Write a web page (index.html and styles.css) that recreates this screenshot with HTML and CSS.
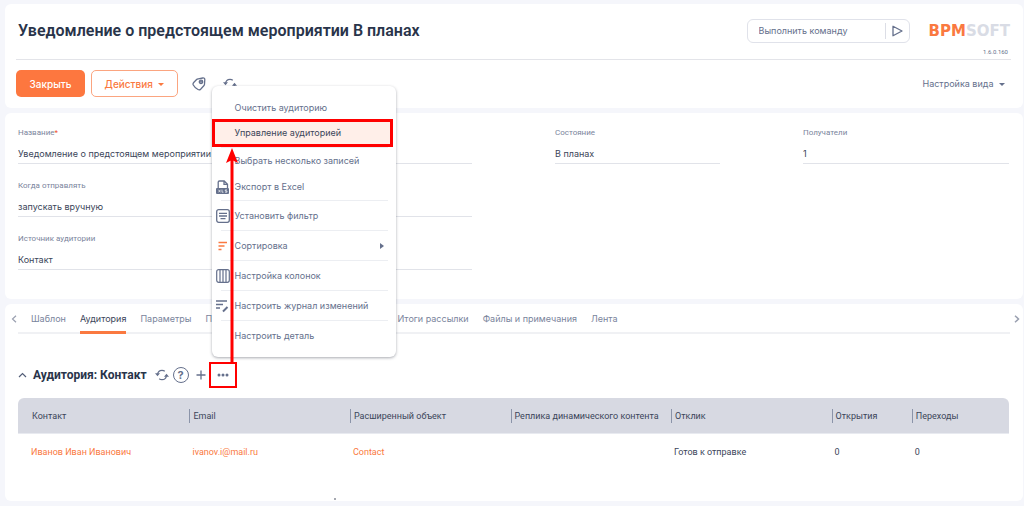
FILE: index.html
```html
<!DOCTYPE html>
<html lang="ru">
<head>
<meta charset="utf-8">
<meta name="viewport" content="width=device-width, initial-scale=1">
<title>Уведомление о предстоящем мероприятии</title>
<link rel="stylesheet" href="styles.css">
</head>
<body>
<header class="card header">
  <div class="header-top">
    <h1 class="title">Уведомление о предстоящем мероприятии В планах</h1>
    <form class="command">
      <input class="command-input" type="text" placeholder="Выполнить команду" aria-label="Выполнить команду">
      <button class="command-run" type="button" aria-label="Выполнить"><svg width="11" height="12" viewBox="0 0 11 12"><path d="M1 1.2v9.6L10 6z" fill="none" stroke="#65708c" stroke-width="1.3" stroke-linejoin="round"/></svg></button>
    </form>
    <div class="brand">
      <div class="logo"><span class="logo-main">BPM</span><span class="logo-rest">SOFT</span></div>
      <div class="version">1.6.0.160</div>
    </div>
  </div>
  <div class="toolbar">
    <button class="btn btn-primary" type="button">Закрыть</button>
    <button class="btn btn-outline" type="button">Действия <span class="caret"></span></button>
    <button class="icon-btn tag" type="button" aria-label="Теги"><svg width="14" height="14" viewBox="0 0 14 14" fill="none" stroke="#65708c" stroke-width="1.3"><path d="M6.2 1.8 10.8 1c1.2-.2 2 .5 2 1.600L12.500 7.200c0 .6-.3 1.200-.7 1.600L8.600 12.200c-.7.7-1.700.8-2.600.3C4 11.600 2.400 10 1.300 8c-.4-.8-.3-1.800.4-2.500L4.600 2.500c.4-.4 1-.6 1.600-.7z"/><circle cx="9" cy="4.800" r="1.700"/><circle cx="9" cy="4.800" r=".4"/></svg></button>
    <button class="icon-btn" type="button" aria-label="Обновить"><svg width="14" height="12" viewBox="0 0 14 12"><g fill="none" stroke="#65708c" stroke-width="1.200"><path d="M2.500 5.500C2.800 3 4.800 1.300 7 1.300c1.100 0 2 .3 2.800 1M11.500 6.500c-.3 2.500-2.300 4.200-4.500 4.200-1.100 0-2-.3-2.800-1"/></g><path d="M0 4.300h5L2.500 7.300zM14 7.700H9l2.500-3z" fill="#65708c"/></svg></button>
    <button class="view-btn" type="button">Настройка вида <span class="caret"></span></button>
  </div>
</header>

<main class="main">
  <section class="card form">
    <div class="form-col">
      <label class="field"><span class="label">Название<span class="required">*</span></span><input class="value" value="Уведомление о предстоящем мероприятии"></label>
      <label class="field"><span class="label">Когда отправлять</span><input class="value" value="запускать вручную"></label>
      <label class="field"><span class="label">Источник аудитории</span><input class="value" value="Контакт"></label>
    </div>
    <div class="form-col">
      <label class="field"><span class="label">Состояние</span><input class="value" value="В планах"></label>
    </div>
    <div class="form-col">
      <label class="field"><span class="label">Получатели</span><input class="value" value="1"></label>
    </div>
  </section>

  <section class="card details">
    <div class="tabs">
      <button class="tab-scroll" type="button" aria-label="Назад"><svg width="6" height="8" viewBox="0 0 6 8"><path d="M5 .7 1.500 4 5 7.300" fill="none" stroke="#9aa0b0" stroke-width="1.200"/></svg></button>
      <div class="tab-list" role="tablist">
        <button class="tab" role="tab" type="button">Шаблон</button>
        <button class="tab tab-active" role="tab" type="button" aria-selected="true">Аудитория</button>
        <button class="tab" role="tab" type="button">Параметры</button>
        <button class="tab tab-wide" role="tab" type="button">Пр</button>
        <button class="tab" role="tab" type="button">Итоги рассылки</button>
        <button class="tab" role="tab" type="button">Файлы и примечания</button>
        <button class="tab" role="tab" type="button">Лента</button>
      </div>
      <button class="tab-scroll" type="button" aria-label="Вперёд"><svg width="6" height="8" viewBox="0 0 6 8"><path d="M1 .7 4.500 4 1 7.300" fill="none" stroke="#9aa0b0" stroke-width="1.500"/></svg></button>
    </div>

    <div class="detail-head">
      <button class="icon-btn" type="button" aria-label="Свернуть"><svg width="9" height="6" viewBox="0 0 9 6"><path d="M1 5l3.500-3.500L8 5" fill="none" stroke="#535e78" stroke-width="1.200"/></svg></button>
      <h2 class="detail-title">Аудитория: Контакт</h2>
      <button class="icon-btn" type="button" aria-label="Обновить список"><svg width="14" height="12" viewBox="0 0 14 12"><g fill="none" stroke="#65708c" stroke-width="1.200"><path d="M2.500 5.500C2.800 3 4.800 1.300 7 1.300c1.100 0 2 .3 2.800 1M11.500 6.500c-.3 2.500-2.300 4.200-4.500 4.200-1.100 0-2-.3-2.800-1"/></g><path d="M0 4.300h5L2.500 7.300zM14 7.700H9l2.500-3z" fill="#65708c"/></svg></button>
      <button class="help" type="button" aria-label="Справка">?</button>
      <button class="icon-btn plus" type="button" aria-label="Добавить"><svg width="10" height="10" viewBox="0 0 10 10"><path d="M5 .5v9M.5 5h9" stroke="#65708c" stroke-width="1.300"/></svg></button>
      <div class="more-wrap">
        <button class="more" type="button" aria-label="Меню"><svg width="12" height="4" viewBox="0 0 12 4" fill="#65708c"><circle cx="2" cy="2" r="1.500"/><circle cx="6" cy="2" r="1.500"/><circle cx="10" cy="2" r="1.500"/></svg></button>
        <div class="menu" role="menu">
          <button class="item item-short" role="menuitem" type="button"><span>Очистить аудиторию</span></button>
          <button class="item item-marked" role="menuitem" type="button"><span>Управление аудиторией</span></button>
          <div class="sep"></div>
          <button class="item item-close" role="menuitem" type="button"><span>Выбрать несколько записей</span></button>
          <button class="item item-close" role="menuitem" type="button"><svg width="14" height="14" viewBox="0 0 14 14"><path d="M2.200 8V2.200C2.200 1.400 2.700 1 3.400 1h4.800L11.500 4.200V8M8 1.200v3.200h3.300" fill="none" stroke="#65708c" stroke-width="1.300"/><rect y="8" width="13" height="6" rx="1" fill="#65708c"/><path d="M2.500 9.800l2 2.500M4.500 9.800l-2 2.500M6 9.600v2.600h1.500M11 9.900H9.300V11H11v1.200H9" fill="none" stroke="#fff" stroke-width=".7"/></svg><span>Экспорт в Excel</span></button>
          <div class="sep"></div>
          <button class="item" role="menuitem" type="button"><svg width="14" height="14" viewBox="0 0 14 14" fill="none" stroke="#65708c" stroke-width="1.300"><rect x=".7" y=".7" width="12.600" height="12.600" rx="2"/><path d="M3 4.300h8M3 7h8M4.500 9.700h5"/></svg><span>Установить фильтр</span></button>
          <div class="sep"></div>
          <button class="item" role="menuitem" type="button"><svg width="14" height="14" viewBox="0 0 14 14" stroke="#fa7940" stroke-width="1.400"><path d="M2.500 3.500h8.500M2.500 7h6M2.500 10.500h3"/></svg><span>Сортировка</span><i class="submenu"></i></button>
          <div class="sep"></div>
          <button class="item" role="menuitem" type="button"><svg width="14" height="14" viewBox="0 0 14 14" fill="none" stroke="#65708c" stroke-width="1.200"><rect x=".7" y=".7" width="12.600" height="12.600" rx="2"/><path d="M4 1v12M7 1v12M10 1v12"/></svg><span>Настройка колонок</span></button>
          <div class="sep"></div>
          <button class="item" role="menuitem" type="button"><svg width="14" height="14" viewBox="0 0 14 14" stroke="#65708c" stroke-width="1.300"><path d="M0 2h11M0 5.500h7M0 9h4"/><path d="M7 12.500 11.500 8" stroke-width="2"/></svg><span>Настроить журнал изменений</span></button>
          <div class="sep"></div>
          <button class="item" role="menuitem" type="button"><span>Настроить деталь</span></button>
        </div>
        <svg class="arrow" width="12" height="214" viewBox="0 0 12 214"><path d="M6 0 12 15 6 12 0 15z" fill="#f00"/><path d="M6 11v203" stroke="#f00" stroke-width="3"/></svg>
      </div>
    </div>

    <table class="grid">
      <colgroup><col class="c-first"><col class="c-wide"><col class="c-wide"><col class="c-wide"><col class="c-wide"><col class="c-narrow"><col></colgroup>
      <thead><tr><th><span>Контакт</span></th><th><span>Email</span></th><th><span>Расширенный объект</span></th><th><span>Реплика динамического контента</span></th><th><span>Отклик</span></th><th><span>Открытия</span></th><th><span>Переходы</span></th></tr></thead>
      <tbody><tr><td><a href="#">Иванов Иван Иванович</a></td><td><a href="#">ivanov.i@mail.ru</a></td><td><a href="#">Contact</a></td><td></td><td>Готов к отправке</td><td>0</td><td>0</td></tr></tbody>
    </table>
  </section>
</main>
</body>
</html>
```
FILE: styles.css
```css
* { box-sizing: border-box; }
body {
  margin: 0;
  padding: 4px 1px 5px 5px;
  background: #f5f6fb;
  font: 9px/14px Inter, Roboto, "Liberation Sans", sans-serif;
  color: #3b4559;
}
button, input { font: inherit; color: inherit; }
button { padding: 0; border: 0; background: none; }
svg { display: block; }
h1, h2 { margin: 0; }
a { color: #fa7940; text-decoration: none; }
.card { background: #fff; border-radius: 6px; }

.header { padding: 0 12px 11px 11px; }
.header-top {
  display: flex;
  align-items: flex-start;
  height: 56px;
  border-bottom: 1px solid #e3e4e9;
}
.title {
  flex: 1;
  margin: 15px 0 0 2px;
  font-family: Roboto, sans-serif;
  font-size: 16px;
  line-height: 24px;
  font-weight: 600;
  color: #29344a;
}
.command {
  display: flex;
  align-items: center;
  width: 163px;
  height: 24px;
  margin-top: 15px;
  border: 1px solid #e0e2ea;
  border-radius: 6px;
}
.command-input {
  flex: 1;
  min-width: 0;
  padding: 0 0 0 11px;
  border: 0;
  outline: 0;
  background: none;
}
.command-input::placeholder { color: #65708c; opacity: 1; }
.command-run {
  display: grid;
  place-items: center;
  width: 24px;
  height: 16px;
  border-left: 1px solid #dcdee6;
}
.brand { margin: 21px 1px 0 19px; }
.logo {
  font: 15px/12px "DejaVu Sans", sans-serif;
  white-space: nowrap;
}
.logo-main { font-weight: 700; color: #fa7940; }
.logo-rest { font-weight: 700; color: #d9dce5; }
.version {
  margin: 11px 2px 0 0;
  font-family: Roboto, sans-serif;
  font-size: 6px;
  line-height: 8px;
  text-align: right;
  color: #65708c;
}

.toolbar { display: flex; align-items: center; padding-top: 10px; }
.btn { height: 27px; border-radius: 5px; font-size: 10px; font-weight: 500; }
.btn-primary { width: 69px; background: #fd773f; color: #fff; }
.btn-outline {
  width: 87px;
  margin-left: 6px;
  border: 1px solid #fba580;
  color: #fa7940;
}
.caret {
  display: inline-block;
  margin-left: 3px;
  border: 3px solid transparent;
  border-top-color: currentColor;
  border-bottom: 0;
  vertical-align: middle;
}
.tag { margin: 0 17px 0 14px; }
.view-btn { margin: 0 6px 0 auto; color: #65708c; }

.main { display: grid; gap: 5px; margin-top: 5px; }
.form {
  display: grid;
  grid-template-columns: 454fr 165fr 206fr;
  column-gap: 83px;
  padding: 13px 14px 29px 13px;
}
.form-col { display: grid; gap: 15px; align-content: start; }
.field { display: grid; gap: 3px; }
.label { font-family: Roboto, sans-serif; font-size: 8px; color: #7a849c; }
.required { color: #f04a2a; }
.value {
  width: 100%;
  height: 21px;
  padding: 0;
  border: 0;
  border-bottom: 1px solid #e1e3e9;
  background: none;
  outline: 0;
}

.details { padding-bottom: 29px; }
.details::after {
  content: "";
  display: block;
  width: 2px;
  height: 2px;
  margin: 28px 0 -28px 329px;
  background: #a5a8b0;
}
.tabs { display: flex; }
.tab-scroll { display: grid; place-items: center; width: 13px; }
.tab-scroll:first-child { padding-left: 4px; }
.tab-list {
  display: flex;
  flex: 1;
  gap: 14px;
  height: 30px;
  padding-left: 13px;
  border-bottom: 2px solid #f0f1f4;
}
.tab {
  height: 30px;
  padding-top: 2px;
  border-bottom: 3px solid transparent;
  color: #7a849c;
  white-space: nowrap;
}
.tab-active { border-color: #fa7940; color: #3b4559; }
.tab-wide { width: 178px; text-align: left; }

.detail-head {
  display: flex;
  align-items: center;
  padding: 28px 0 10px 13px;
}
.detail-title {
  margin: 0 8px 0 6px;
  font-family: Roboto, sans-serif;
  font-size: 12px;
  line-height: 16px;
  font-weight: 700;
  color: #29344a;
}
.help {
  width: 16px;
  height: 16px;
  margin-left: 4px;
  border: 1px solid #65708c;
  border-radius: 50%;
  font-size: 11px;
  line-height: 14px;
  font-weight: 700;
  color: #65708c;
}
.plus { margin: 0 3px 0 7px; }
.more-wrap { position: relative; }
.more {
  display: grid;
  place-items: center;
  width: 28px;
  height: 26px;
  border: 2px solid #f00;
}
.menu {
  position: absolute;
  bottom: calc(100% + 5px);
  left: 3px;
  width: 184px;
  padding: 11px 0 7px;
  border-radius: 6px;
  background: #fff;
  box-shadow: 0 1px 3px rgba(40, 45, 60, .4);
  color: #65708c;
}
.item {
  position: relative;
  display: flex;
  align-items: center;
  width: 100%;
  height: 29px;
  padding-left: 23px;
  white-space: nowrap;
}
.item svg { position: absolute; left: 4px; }
.item-short { height: 22px; }
.item-close { height: 26px; }
.item-marked {
  width: 181px;
  height: 28px;
  padding-left: 20px;
  border: 3px solid #f00;
  background: #ffefe9;
  color: #3b4559;
}
.sep { height: 1px; margin: 0 8px 0 9px; background: #eceef2; }
.submenu {
  margin: 0 12px 0 auto;
  border: 3px solid transparent;
  border-left: 4px solid #65708c;
  border-right: 0;
}
.arrow {
  position: absolute;
  bottom: 100%;
  left: 17px;
}

.grid {
  width: calc(100% - 27px);
  margin-left: 13px;
  border-spacing: 0;
  table-layout: fixed;
  font-family: Roboto, sans-serif;
}
.c-first { width: 17.3%; }
.c-wide { width: 16.2%; }
.c-narrow { width: 8.1%; }
.grid th {
  height: 36px;
  padding: 0;
  border-bottom: 1px solid #e8eaf0;
  background: #d7d9e2;
  font-weight: 400;
  text-align: left;
  white-space: nowrap;
}
.grid th span {
  display: block;
  padding-left: 3px;
  border-left: 1px solid #8b94a9;
}
.grid th:first-child { border-top-left-radius: 6px; }
.grid th:last-child { border-top-right-radius: 6px; }
.grid th:first-child span { padding-left: 14px; border: 0; }
.grid td { height: 36px; padding: 0 0 0 3px; }
.grid td:first-child { padding-left: 13px; }
```
